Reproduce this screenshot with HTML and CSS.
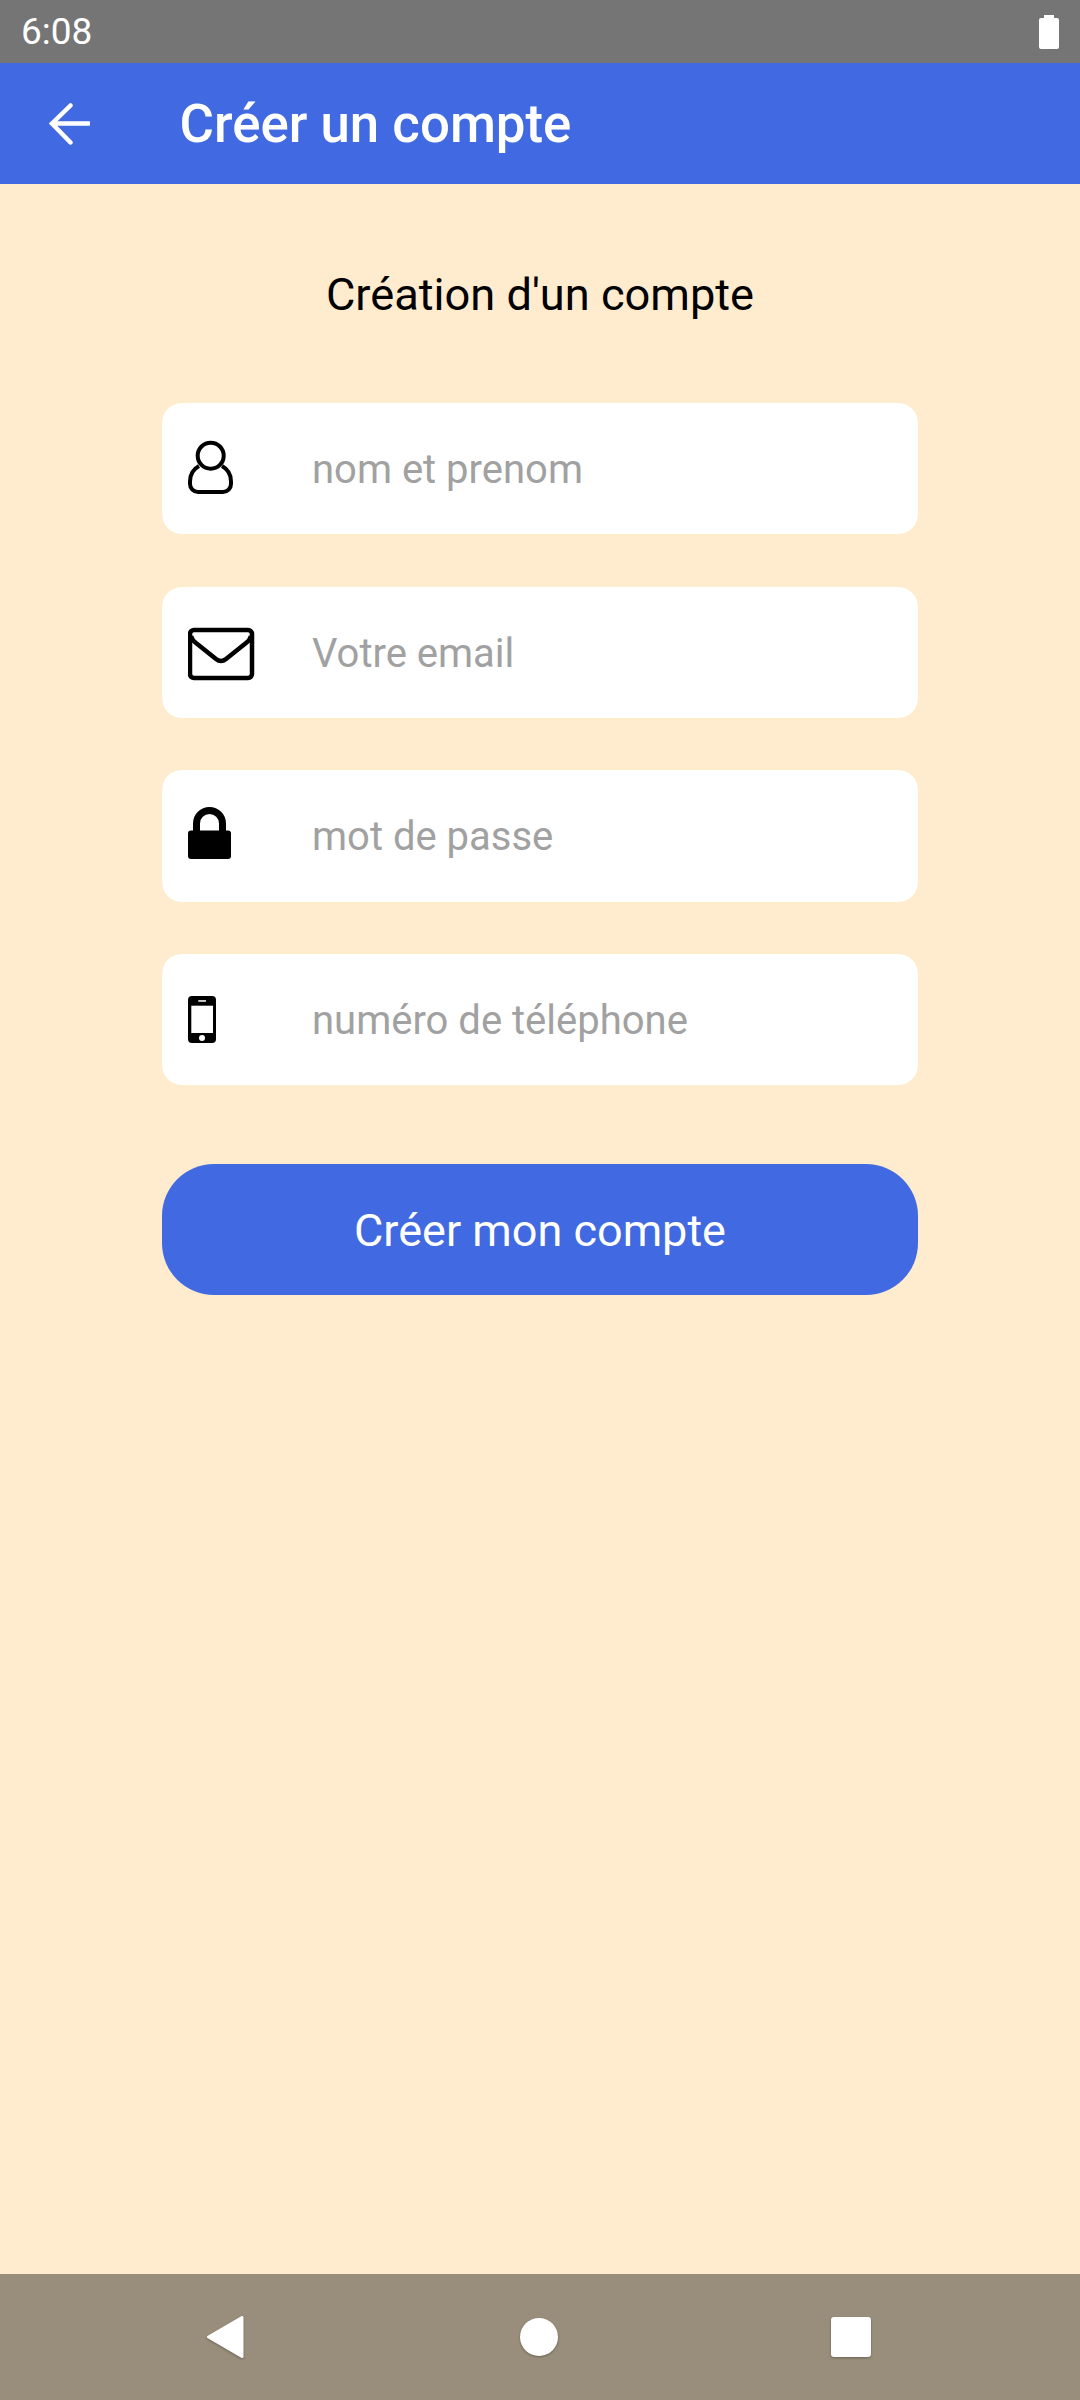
FILE: index.html
```html
<!DOCTYPE html>
<html lang="fr">
<head>
    <meta charset="UTF-8">
    <meta name="viewport" content="width=device-width, initial-scale=1.0">
    <title>Créer un compte</title>
    <link rel="stylesheet" href="styles.css">
</head>
<body>
    <div class="screen">
        <div class="status-bar">
            <span class="time">6:08</span>
            <svg class="battery" width="20" height="34" viewBox="0 0 20 34">
                <path fill="#fff" d="M5 0h10v3h3a2 2 0 0 1 2 2v27a2 2 0 0 1-2 2H2a2 2 0 0 1-2-2V5a2 2 0 0 1 2-2h3z"/>
            </svg>
        </div>

        <header class="app-bar">
            <svg class="back-arrow" width="42" height="42" viewBox="0 0 42 42">
                <path fill="none" stroke="#fff" stroke-width="4.500" stroke-linecap="round" d="M41 20.500H4M22.500 2.500 4 20.500 22.500 39.500"/>
            </svg>
            <h1>Créer un compte</h1>
        </header>

        <main class="content">
            <h2>Création d'un compte</h2>

            <form class="signup-form">
                <div class="field">
                    <svg class="field-icon" viewBox="0 0 70 70">
                        <circle cx="22.700" cy="22.700" r="13" fill="none" stroke="#000" stroke-width="4"/>
                        <path fill="none" stroke="#000" stroke-width="4" d="M11 33C5.500 36 2 42 2 48.500V51a8 8 0 0 0 8 8H35a8 8 0 0 0 8-8V48.500C43 42 39.500 36 34 33"/>
                    </svg>
                    <span class="placeholder">nom et prenom</span>
                </div>
                <div class="field">
                    <svg class="field-icon" viewBox="0 0 70 70">
                        <rect x="2" y="13" width="62" height="48" rx="4" fill="none" stroke="#000" stroke-width="4.500"/>
                        <path fill="none" stroke="#000" stroke-width="4.500" d="M3 19Q4 23 8 26L28 42Q33 46 38 42L58 26Q62 23 63 19"/>
                    </svg>
                    <span class="placeholder">Votre email</span>
                </div>
                <div class="field">
                    <svg class="field-icon" viewBox="0 0 70 70">
                        <path fill="none" stroke="#000" stroke-width="7" d="M8.500 31V22.500a13 13 0 0 1 26 0V31"/>
                        <rect x="0" y="29.500" width="43" height="28.500" rx="3"/>
                    </svg>
                    <span class="placeholder">mot de passe</span>
                </div>
                <div class="field">
                    <svg class="field-icon" viewBox="0 0 70 70">
                        <rect x="0" y="11" width="28" height="47" rx="4"/>
                        <rect x="3.300" y="20.700" width="21.700" height="27.300" fill="#fff"/>
                        <rect x="10.300" y="15.200" width="7.700" height="1.500" fill="#fff"/>
                        <circle cx="14" cy="53" r="3" fill="#fff"/>
                    </svg>
                    <span class="placeholder">numéro de téléphone</span>
                </div>
                <button type="button" class="submit">Créer mon compte</button>
            </form>
        </main>

        <nav class="nav-bar">
            <svg class="nav-icon" width="38" height="44" viewBox="0 0 38 44">
                <path fill="#fff" stroke="#fff" stroke-width="3" stroke-linejoin="round" d="M2.500 22 36 2.500V41.500z"/>
            </svg>
            <svg class="nav-icon nav-home" width="38" height="38" viewBox="0 0 38 38">
                <circle cx="19" cy="19" r="19" fill="#fff"/>
            </svg>
            <svg class="nav-icon" width="40" height="40" viewBox="0 0 40 40">
                <rect width="40" height="40" rx="3" fill="#fff"/>
            </svg>
        </nav>
    </div>
</body>
</html>
```

FILE: styles.css
```css
* {
    box-sizing: border-box;
}
body {
    margin: 0;
    font-family: Roboto, "Noto Sans", sans-serif;
    background-color: #ffebcd;
}
.screen {
    display: flex;
    flex-direction: column;
    height: 2400px;
}
.status-bar {
    display: flex;
    justify-content: space-between;
    align-items: center;
    height: 63px;
    padding: 0 21px 0 21px;
    background-color: #757575;
    color: #fff;
}
.time {
    font-size: 37px;
}
.app-bar {
    display: flex;
    align-items: center;
    gap: 89.500px;
    height: 121px;
    padding: 0 0 0 48px;
    background-color: #4169e1;
    color: #fff;
}
.app-bar h1 {
    margin: 0;
    padding-top: 1px;
    font-size: 52.800px;
    font-weight: 500;
}
.content {
    flex: 1;
    padding-top: 83px;
}
.content h2 {
    margin: 0 0 79.750px;
    font-size: 45.200px;
    line-height: 56px;
    font-weight: 400;
    text-align: center;
    color: #000;
}
.signup-form {
    display: flex;
    flex-direction: column;
    gap: 52.500px;
    width: 756px;
    margin-left: 162px;
}
.field {
    display: flex;
    align-items: center;
    height: 131.250px;
    padding-left: 26px;
    background: #fff;
    border-radius: 20px;
}
.field-icon {
    flex: none;
    width: 70px;
    height: 70px;
    margin-right: 54px;
}
.placeholder {
    padding-top: 2px;
    font-size: 40px;
    color: #a1a1a1;
}
.submit {
    height: 131.250px;
    margin-top: 26px;
    padding-top: 3px;
    border: none;
    border-radius: 52px;
    background-color: #4169e1;
    color: #fff;
    font-family: inherit;
    font-size: 45px;
}
.nav-bar {
    display: flex;
    justify-content: space-between;
    align-items: center;
    height: 126px;
    padding: 0 209px 0 206px;
    background-color: #998d7b;
}
.nav-icon {
    filter: drop-shadow(0 1px 1px rgba(0, 0, 0, 0.3));
}
.nav-home {
    margin-left: 3px;
}
```
